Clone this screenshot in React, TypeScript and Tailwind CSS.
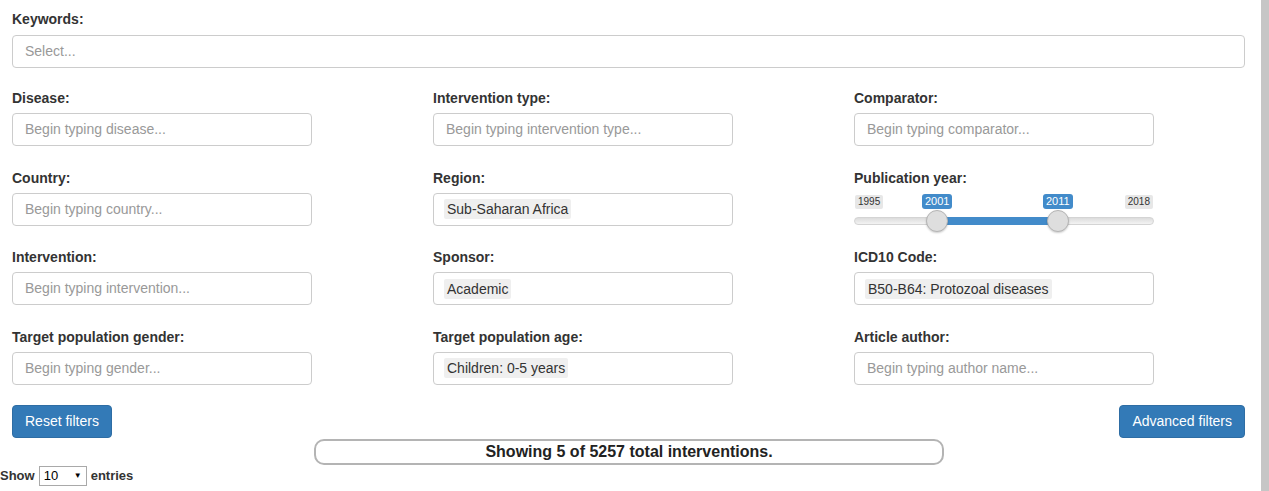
import React from 'react'

const font = { fontFamily: '"Liberation Sans", Arial, Helvetica, sans-serif' }

function Field({ label, placeholder, tag }: { label: string; placeholder?: string; tag?: string }) {
  return (
    <div className="mb-[21.5px]">
      <label className="block h-5 leading-5 mb-[5px] text-[14px] font-bold text-[#333]">{label}</label>
      <div className="w-[300px] h-[33px] border border-[#ccc] rounded bg-white flex items-center px-3 text-[14px]">
        {tag ? (
          <span className="bg-[#efefef] text-[#333] px-[3px] py-px leading-[18px] rounded-[2px] -ml-[2px]">{tag}</span>
        ) : (
          <span className="text-[#999]">{placeholder}</span>
        )}
      </div>
    </div>
  )
}

function YearSlider() {
  return (
    <div className="mb-[21.5px]">
      <label className="block h-5 leading-5 mb-[5px] text-[14px] font-bold text-[#333]">Publication year:</label>
      <div className="relative w-[300px] h-[33px]">
        {/* min / max */}
        <span className="absolute left-px top-[2px] px-[3px] text-[10px] leading-[14px] bg-[#e7e7e7] text-[#333] rounded-[2px]">1995</span>
        <span className="absolute right-px top-[2px] px-[3px] text-[10px] leading-[14px] bg-[#e7e7e7] text-[#333] rounded-[2px]">2018</span>
        {/* values */}
        <span className="absolute left-[68px] top-[1px] px-[3px] text-[11px] leading-[15px] bg-[#428bca] text-white rounded-[3px]">2001</span>
        <span className="absolute left-[189px] top-[1px] px-[3px] text-[11px] leading-[15px] bg-[#428bca] text-white rounded-[3px]">2011</span>
        {/* track */}
        <div className="absolute left-0 right-0 top-[24px] h-[8px] rounded-full bg-gradient-to-b from-[#dcdcdc] to-[#f3f3f3] border border-[#d4d4d4]" />
        <div className="absolute left-[83px] w-[121px] top-[24px] h-[8px] bg-[#428bca]" />
        {/* handles */}
        <div className="absolute left-[72px] top-[17px] w-[22px] h-[22px] rounded-full bg-[#dedede] border border-[#b5b5b5] shadow-[0_1px_2px_rgba(0,0,0,0.2)]" />
        <div className="absolute left-[193px] top-[17px] w-[22px] h-[22px] rounded-full bg-[#dedede] border border-[#b5b5b5] shadow-[0_1px_2px_rgba(0,0,0,0.2)]" />
      </div>
    </div>
  )
}

export default function App() {
  return (
    <div className="flex w-[1269px] h-[491px] bg-white overflow-hidden text-[#333]" style={font}>
      <div className="w-[1261px] shrink-0">
        <div className="pl-3 pr-4 pt-[9px]">
          {/* Keywords */}
          <div className="mb-[20px]">
            <label className="block h-5 leading-5 mb-[6px] text-[14px] font-bold text-[#333]">Keywords:</label>
            <div className="h-[33px] border border-[#ccc] rounded flex items-center px-3 text-[14px] text-[#999]">Select...</div>
          </div>

          <div className="grid grid-cols-[421px_421px_1fr]">
            <Field label="Disease:" placeholder="Begin typing disease..." />
            <Field label="Intervention type:" placeholder="Begin typing intervention type..." />
            <Field label="Comparator:" placeholder="Begin typing comparator..." />

            <Field label="Country:" placeholder="Begin typing country..." />
            <Field label="Region:" tag="Sub-Saharan Africa" />
            <YearSlider />

            <Field label="Intervention:" placeholder="Begin typing intervention..." />
            <Field label="Sponsor:" tag="Academic" />
            <Field label="ICD10 Code:" tag="B50-B64: Protozoal diseases" />

            <Field label="Target population gender:" placeholder="Begin typing gender..." />
            <Field label="Target population age:" tag="Children: 0-5 years" />
            <Field label="Article author:" placeholder="Begin typing author name..." />
          </div>

          <div className="flex justify-between -mt-[1px]">
            <button className="h-[33px] px-3 rounded bg-[#337ab7] border border-[#2e6da4] text-white text-[14px]">Reset filters</button>
            <button className="h-[33px] px-3 rounded bg-[#337ab7] border border-[#2e6da4] text-white text-[14px]">Advanced filters</button>
          </div>
        </div>

        <div className="flex mt-px">
          <div className="ml-[314px] w-[630px] h-[26px] border-2 border-[#b4b4b4] rounded-[10px] flex items-center justify-center text-[16px] font-bold text-[#222]">
            Showing 5 of 5257 total interventions.
          </div>
        </div>

        <div className="flex items-center gap-[4px] mt-px text-[13px] font-bold text-[#333]">
          <span>Show</span>
          <div className="w-[48px] h-[20px] border border-[#a9a9a9] flex items-center justify-between px-[4px] font-normal text-[13px] text-black">
            <span>10</span>
            <span className="text-[8px]">▼</span>
          </div>
          <span>entries</span>
        </div>
      </div>
      <div className="flex-1 bg-[#c6c6c6]" />
    </div>
  )
}
